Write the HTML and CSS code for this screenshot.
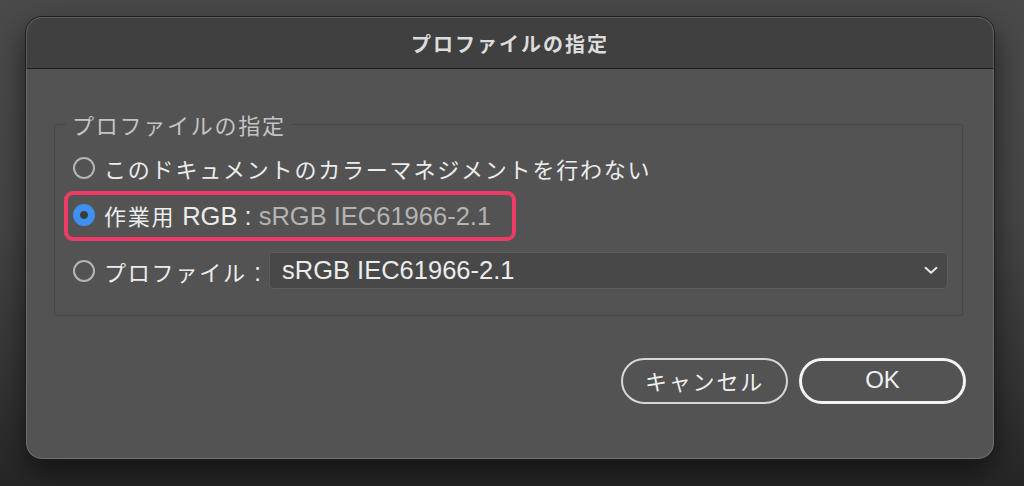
FILE: index.html
```html
<!DOCTYPE html>
<html lang="ja">
<head>
<meta charset="utf-8">
<title>プロファイルの指定</title>
<link rel="stylesheet" href="styles.css">
</head>
<body>
<div class="window">
  <div class="titlebar">プロファイルの指定</div>
  <div class="content">
    <fieldset class="group">
      <legend class="legend">プロファイルの指定</legend>
      <div class="row row-first">
        <span class="radio"></span>
        <span class="label">このドキュメントのカラーマネジメントを行わない</span>
      </div>
      <div class="row row-second">
        <div class="highlight">
          <span class="radio radio-on"></span>
          <span class="label">作業用 <span class="latin">RGB : </span><span class="latin muted">sRGB IEC61966-2.1</span></span>
        </div>
      </div>
      <div class="row row-third">
        <span class="radio"></span>
        <span class="label">プロファイル<span class="latin"> :</span></span>
        <div class="select">
          <span class="select-text latin">sRGB IEC61966-2.1</span>
          <svg class="chevron" width="14" height="9" viewBox="0 0 14 9"><path d="M1.5 1.8 L7 6.8 L12.5 1.8" fill="none" stroke="#e6e6e6" stroke-width="2" stroke-linecap="round" stroke-linejoin="round"/></svg>
        </div>
      </div>
    </fieldset>
    <div class="buttons">
      <button class="btn">キャンセル</button>
      <button class="btn btn-default"><span class="btn-latin">OK</span></button>
    </div>
  </div>
</div>
</body>
</html>
```

FILE: styles.css
```css
* { box-sizing: border-box; }
html, body { margin: 0; height: 100%; }
body {
  background: linear-gradient(180deg, #4a4a4a 0%, #454545 45%, #333333 80%, #262626 100%);
  font-family: "Liberation Sans", "Noto Sans CJK JP", sans-serif;
  padding: 16px 29px 26px 25px;
  overflow: hidden;
}
.window {
  position: relative;
  height: 444px;
  background: #535353;
  border: 1px solid #1c1c1c;
  border-radius: 17px;
  box-shadow: 0 12px 30px rgba(0,0,0,0.55);
  display: flex;
  flex-direction: column;
}
.window::before {
  content: "";
  position: absolute;
  inset: 0;
  border: 1px solid rgba(255,255,255,0.16);
  border-radius: 16px;
  pointer-events: none;
}
.titlebar {
  height: 52px;
  background: #404040;
  border-bottom: 1px solid #1e1e1e;
  border-radius: 16px 16px 0 0;
  display: flex;
  align-items: center;
  justify-content: center;
  color: #dcdcdc;
  font-family: "Noto Sans CJK JP", sans-serif;
  font-weight: 700;
  font-size: 20px;
  letter-spacing: 2px;
  padding-top: 1px;
}
.content {
  flex: 1;
  padding: 42px 28px 0 28px;
  display: flex;
  flex-direction: column;
}
.group {
  margin: 0 3px 0 0;
  border: 1px solid #474747;
  border-radius: 2px;
  padding: 16px 14px 26px 18px;
  display: flex;
  flex-direction: column;
  min-width: 0;
}
.legend {
  margin-left: -7px;
  padding: 0 6px;
  color: #c4c4c4;
  font-family: "Noto Sans CJK JP", sans-serif;
  font-size: 22px;
  line-height: 26px;
  letter-spacing: 1.75px;
}
.row {
  display: flex;
  align-items: center;
  color: #ececec;
  font-size: 22px;
}
.row-first { height: 30px; }
.row-second { height: 30px; margin-top: 17px; }
.row-third { height: 37px; margin-top: 22px; }
.label {
  font-family: "Noto Sans CJK JP", sans-serif;
  letter-spacing: 1.8px;
  white-space: nowrap;
}
.latin {
  font-family: "Liberation Sans", "Noto Sans CJK JP", sans-serif;
  font-size: 25.5px;
  letter-spacing: 0;
}
.muted { color: #b4b4b4; }
.radio {
  width: 22px;
  height: 22px;
  border-radius: 50%;
  border: 2px solid #b5b5b5;
  margin-right: 9px;
  flex: none;
}
.radio-on {
  border: none;
  background: radial-gradient(circle, #3c3c3c 0 3.5px, #3f91ef 4.5px);
}
.highlight {
  position: relative;
  display: flex;
  align-items: center;
}
.highlight::after {
  content: "";
  position: absolute;
  left: -9px;
  right: -25px;
  top: -8px;
  bottom: -10px;
  border: 4px solid #ee3b65;
  border-radius: 9px;
  pointer-events: none;
}
.select {
  flex: 1;
  height: 37px;
  margin-left: 8px;
  background: #484848;
  border: 1px solid #5c5c5c;
  border-radius: 4px;
  display: flex;
  align-items: center;
  justify-content: space-between;
  padding: 0 9px 0 12px;
}
.select-text { color: #ececec; }
.chevron { display: block; }
.buttons {
  display: flex;
  justify-content: flex-end;
  gap: 11px;
  margin-top: 42px;
}
.btn {
  width: 167px;
  height: 46px;
  border-radius: 23px;
  background: transparent;
  color: #efefef;
  font-family: "Noto Sans CJK JP", sans-serif;
  font-size: 22px;
  letter-spacing: 1.8px;
  border: 2px solid #d8d8d8;
  padding: 0 0 2px;
  display: flex;
  align-items: center;
  justify-content: center;
}
.btn-default {
  border: 3px solid #f4f4f4;
}
.btn-latin {
  font-family: "Liberation Sans", sans-serif;
  font-size: 24px;
  letter-spacing: 0;
}
```
